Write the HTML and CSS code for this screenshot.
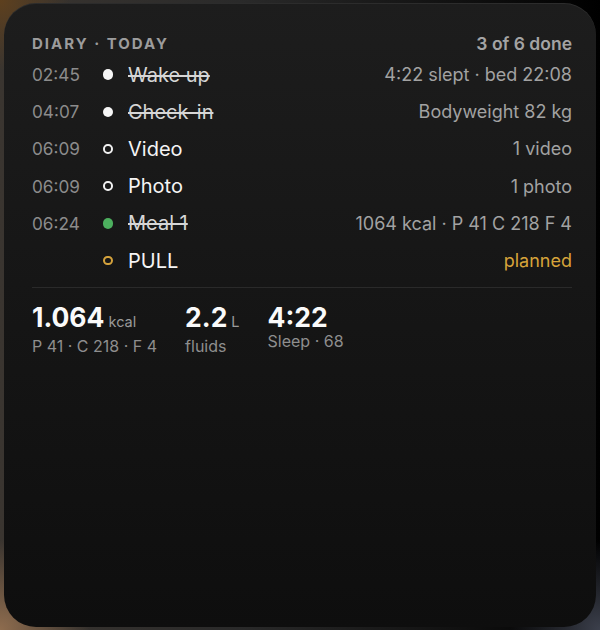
FILE: index.html
```html
<!DOCTYPE html>
<html lang="en">
<head>
    <meta charset="UTF-8">
    <meta name="viewport" content="width=device-width, initial-scale=1.0">
    <title>Diary</title>
    <link rel="stylesheet" href="styles.css">
</head>
<body>
    <div class="card">
        <div class="card-head">
            <span class="title">DIARY · TODAY</span>
            <span class="count">3 of 6 done</span>
        </div>

        <div class="entries">
            <div class="entry done">
                <span class="time">02:45</span>
                <span class="dot filled"></span>
                <span class="name">Wake up</span>
                <span class="info">4:22 slept · bed 22:08</span>
            </div>
            <div class="entry done">
                <span class="time">04:07</span>
                <span class="dot filled"></span>
                <span class="name">Check-in</span>
                <span class="info">Bodyweight 82 kg</span>
            </div>
            <div class="entry">
                <span class="time">06:09</span>
                <span class="dot ring"></span>
                <span class="name">Video</span>
                <span class="info">1 video</span>
            </div>
            <div class="entry">
                <span class="time">06:09</span>
                <span class="dot ring"></span>
                <span class="name">Photo</span>
                <span class="info">1 photo</span>
            </div>
            <div class="entry done">
                <span class="time">06:24</span>
                <span class="dot green"></span>
                <span class="name">Meal 1</span>
                <span class="info">1064 kcal · P 41 C 218 F 4</span>
            </div>
            <div class="entry">
                <span class="time"></span>
                <span class="dot ring orange"></span>
                <span class="name">PULL</span>
                <span class="info planned">planned</span>
            </div>
        </div>

        <div class="summary">
            <div class="stat">
                <div class="big">1.064<span class="unit">kcal</span></div>
                <div class="sub">P 41 · C 218 · F 4</div>
            </div>
            <div class="stat">
                <div class="big">2.2<span class="unit">L</span></div>
                <div class="sub">fluids</div>
            </div>
            <div class="stat">
                <div class="big">4:22</div>
                <div class="sub">Sleep · 68</div>
            </div>
        </div>
    </div>
</body>
</html>
```

FILE: styles.css
```css
body {
    margin: 0;
    padding: 3px 4px;
    height: 630px;
    box-sizing: border-box;
    font-family: Inter, 'Noto Sans', sans-serif;
    background:
        radial-gradient(circle at 0 0, #5e401e 0, rgba(94, 64, 30, 0) 70px),
        radial-gradient(circle at 0 100%, #8e6c4e 0, rgba(142, 108, 78, 0) 90px),
        radial-gradient(circle at 100% 100%, #3c404c 0, rgba(60, 64, 76, 0) 90px),
        linear-gradient(90deg, #3a3530 0%, #2a2a2a 40%, #000 100%);
    overflow: hidden;
}

.card {
    height: 624px;
    box-sizing: border-box;
    padding: 30px 24px 0 28px;
    border-radius: 32px;
    background: linear-gradient(180deg, #1d1d1d 0%, #161616 45%, #0e0e0e 100%);
    box-shadow: inset 0 1px 0 rgba(255, 255, 255, 0.07);
    color: #fff;
}

/* Header */
.card-head {
    display: flex;
    justify-content: space-between;
    align-items: center;
    height: 20px;
}

.title {
    font-size: 15px;
    font-weight: 700;
    letter-spacing: 2px;
    color: #9c9c9c;
}

.count {
    font-size: 17.5px;
    font-weight: 600;
    color: #a4a4a4;
}

/* Entries */
.entries {
    margin-top: 3px;
}

.entry {
    display: grid;
    grid-template-columns: 56px 20px 1fr auto;
    column-gap: 10px;
    align-items: center;
    height: 37.2px;
}

.entry .time {
    font-size: 17.2px;
    color: #8c8c8c;
}

.entry .name {
    font-size: 20px;
    color: #f4f4f4;
}

.entry.done .name {
    text-decoration: line-through;
    text-decoration-thickness: 1.5px;
    color: #d6d6d6;
}

.entry .info {
    font-size: 18px;
    color: #a2a2a2;
    text-align: right;
}

.entry .info.planned {
    color: #d7a43a;
}

.dot {
    justify-self: center;
    width: 10.5px;
    height: 10.5px;
    border-radius: 50%;
    box-sizing: border-box;
}

.dot.filled {
    background: #f6f6f6;
}

.dot.green {
    background: #4caf5e;
}

.dot.ring {
    width: 9.5px;
    height: 9.5px;
    border: 2px solid #f0f0f0;
}

.dot.ring.orange {
    border-color: #d4a23c;
}

/* Summary */
.summary {
    display: flex;
    gap: 28px;
    margin-top: 8px;
    padding-top: 13px;
    border-top: 1px solid #2a2a2a;
}

.big {
    font-size: 26.5px;
    font-weight: 700;
    line-height: 32px;
    color: #fafafa;
}

.unit {
    margin-left: 4px;
    font-size: 14.5px;
    font-weight: 400;
    color: #9a9a9a;
}

.sub {
    font-size: 16px;
    color: #8e8e8e;
    margin-top: -2px;
}
```
